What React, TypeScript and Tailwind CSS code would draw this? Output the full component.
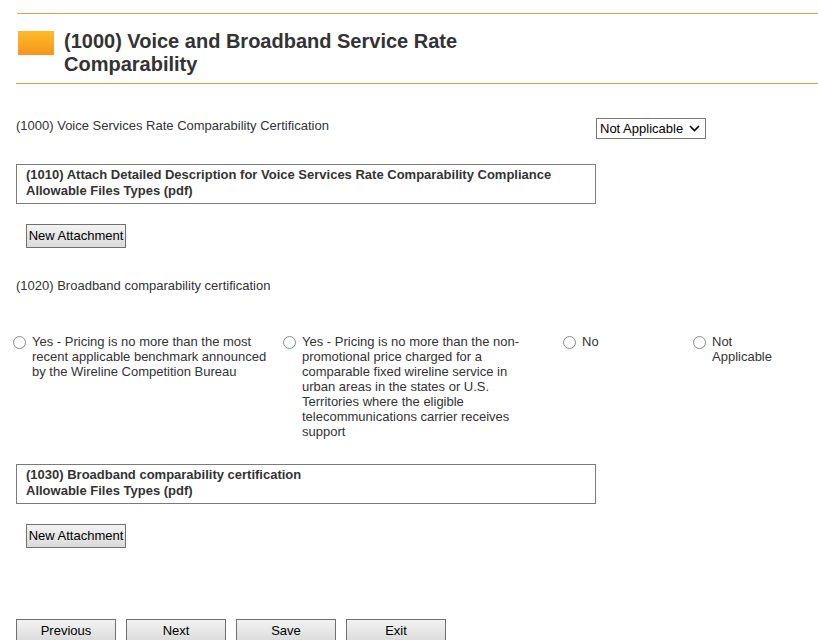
import * as React from "react";

// Radio options for (1020)
const broadbandOptions = [
  {
    id: "yes-benchmark",
    label: "Yes - Pricing is no more than the most recent applicable benchmark announced by the Wireline Competition Bureau",
    col: "w-[270px]",
    text: "w-[244px]",
  },
  {
    id: "yes-urban",
    label:
      "Yes - Pricing is no more than the non-promotional price charged for a comparable fixed wireline service in urban areas in the states or U.S. Territories where the eligible telecommunications carrier receives support",
    col: "w-[280px]",
    text: "w-[228px]",
  },
  { id: "no", label: "No", col: "w-[130px]", text: "w-[70px]" },
  { id: "na", label: "Not Applicable", col: "flex-1", text: "w-[70px]" },
];

function AttachmentBox({ title }: { title: string }) {
  return (
    <div className="ml-4 w-[580px] border border-[#7a7a7a] pl-[9px] pt-[2px] pb-[4px] text-[13px] leading-[16px] font-bold text-[#333]">
      <div>{title}</div>
      <div>Allowable Files Types (pdf)</div>
    </div>
  );
}

function GrayButton({ label, className = "" }: { label: string; className?: string }) {
  return (
    <button
      type="button"
      className={`h-[24px] w-[100px] border border-[#707070] bg-linear-to-b from-[#f3f3f3] to-[#dadada] text-[13px] leading-[22px] text-black ${className}`}
    >
      {label}
    </button>
  );
}

function Radio({ checked, onClick }: { checked: boolean; onClick: () => void }) {
  return (
    <span
      onClick={onClick}
      className="mt-[2px] flex h-[13px] w-[13px] shrink-0 cursor-pointer items-center justify-center rounded-full border border-[#8a8a8a] bg-white"
    >
      {checked && <span className="h-[5px] w-[5px] rounded-full bg-[#333]" />}
    </span>
  );
}

export default function App() {
  const [selected, setSelected] = React.useState<string | null>(null);

  return (
    <div className="min-h-[640px] bg-white pt-[13px] font-['Liberation_Sans',Arial,sans-serif] text-[#333]">
      {/* Header */}
      <div className="ml-[17px] h-px bg-[#e5a040]" />
      <div className="mt-[16px] flex items-start">
        <div className="ml-[18px] mt-px h-[24px] w-[36px] bg-linear-to-b from-[#fdbb2a] to-[#f7941d]" />
        <h1 className="ml-[10px] w-[440px] text-[20px] leading-[23px] font-bold text-[#333]">
          (1000) Voice and Broadband Service Rate Comparability
        </h1>
      </div>
      <div className="ml-4 mt-[7px] h-px bg-[#e5a040]" />

      {/* (1000) certification */}
      <div className="mt-[34px] flex items-start">
        <div className="ml-4 w-[580px] text-[13px] leading-[15px]">
          (1000) Voice Services Rate Comparability Certification
        </div>
        <div className="flex h-[21px] w-[110px] items-center justify-between border border-[#767676] bg-white pl-[3px] pr-[5px] text-[13px] text-black">
          <span>Not Applicable</span>
          <svg width="11" height="7" viewBox="0 0 11 7" fill="none">
            <path d="M1 1l4.5 4.5L10 1" stroke="#000" strokeWidth="1.6" />
          </svg>
        </div>
      </div>

      <div className="mt-[25px]">
        <AttachmentBox title="(1010) Attach Detailed Description for Voice Services Rate Comparability Compliance" />
      </div>
      <GrayButton label="New Attachment" className="ml-[26px] mt-[20px]" />

      {/* (1020) broadband certification */}
      <div className="ml-4 mt-[30px] text-[13px] leading-[15px]">(1020) Broadband comparability certification</div>

      <div className="mt-[41px] flex pl-[13px] text-[13px] leading-[15px]">
        {broadbandOptions.map((opt) => (
          <div key={opt.id} className={`flex items-start ${opt.col}`}>
            <Radio checked={selected === opt.id} onClick={() => setSelected(opt.id)} />
            <span className={`ml-[6px] ${opt.text}`}>{opt.label}</span>
          </div>
        ))}
      </div>

      <div className="mt-[25px]">
        <AttachmentBox title="(1030) Broadband comparability certification" />
      </div>
      <GrayButton label="New Attachment" className="ml-[26px] mt-[20px]" />

      {/* Navigation */}
      <div className="ml-4 mt-[71px] flex gap-[10px] pb-4">
        <GrayButton label="Previous" />
        <GrayButton label="Next" />
        <GrayButton label="Save" />
        <GrayButton label="Exit" />
      </div>
    </div>
  );
}
